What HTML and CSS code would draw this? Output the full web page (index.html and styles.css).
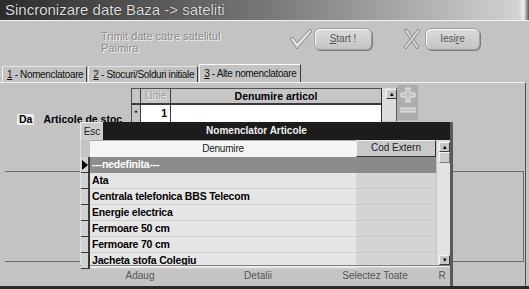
FILE: index.html
```html
<!DOCTYPE html>
<html>
<head>
<meta charset="utf-8">
<link rel="stylesheet" href="styles.css">
</head>
<body>
<div class="window">
  <div class="titlebar">Sincronizare date Baza -&gt; sateliti</div>
  <div class="top">
    <div class="msg">Trimit date catre satelitul<br>Palmira</div>
    <svg class="ico ico-check" width="24" height="22" viewBox="0 0 24 22">
      <path d="M1 11 L4 9 L8 15 L21 1 L23 3 L8 21 Z" fill="#d6d6d6" stroke="#8a8a8a" stroke-width="1"/>
      <path d="M4 11 L8 17 L21 3" fill="none" stroke="#f4f4f4" stroke-width="1"/>
    </svg>
    <div class="btn btn-start"><u>S</u>tart !</div>
    <svg class="ico ico-x" width="20" height="22" viewBox="0 0 20 22">
      <path d="M2 2 L5 1 L17 19 L15 21 Z" fill="#d6d6d6" stroke="#8a8a8a" stroke-width="1"/>
      <path d="M16 1 L18 3 L4 21 L2 19 Z" fill="#d6d6d6" stroke="#8a8a8a" stroke-width="1"/>
    </svg>
    <div class="btn btn-exit">Iesi<u>r</u>e</div>
  </div>
  <div class="tabs">
    <div class="tab"><u>1</u> - Nomenclatoare</div>
    <div class="tab"><u>2</u> - Stocuri/Solduri initiale</div>
    <div class="tab active"><u>3</u> - Alte nomenclatoare</div>
  </div>
  <div class="page">
    <div class="row1">
      <div class="labels"><span class="da">Da</span><span class="art">Articole de stoc</span></div>
      <div class="sgrid">
        <div class="sg-head">
          <div class="sg-ind"></div>
          <div class="sg-line">Linie</div>
          <div class="sg-name">Denumire articol</div>
        </div>
        <div class="sg-row">
          <div class="sg-ind">*</div>
          <div class="sg-line">1</div>
          <div class="sg-name"></div>
        </div>
      </div>
      <div class="sscroll"><div class="arrow-btn">&#9652;</div></div>
      <div class="pm">
        <svg width="16" height="16" viewBox="0 0 16 16"><path d="M6 1 H10 V6 H15 V10 H10 V15 H6 V10 H1 V6 H6 Z" fill="#c4c4c4" stroke="#e8e8e8" stroke-width="1"/></svg>
        <svg width="16" height="6" viewBox="0 0 16 6"><path d="M1 1 H15 V5 H1 Z" fill="#c4c4c4" stroke="#e8e8e8" stroke-width="1"/></svg>
      </div>
    </div>
    <div class="frame"></div>
  </div>

  <div class="popup">
    <div class="p-title">
      <div class="esc">Esc</div>
      <div class="p-caption">Nomenclator Articole</div>
    </div>
    <div class="p-body">
      <div class="p-grid">
        <div class="p-head"><div class="c-ind"></div><div class="c-name">Denumire</div><div class="c-code">Cod Extern</div></div>
        <div class="p-rows">
          <div class="p-row sel"><div class="c-ind"><span class="tri"></span></div><div class="c-name">---nedefinita---</div><div class="c-code"></div></div>
          <div class="p-row"><div class="c-ind"></div><div class="c-name">Ata</div><div class="c-code"></div></div>
          <div class="p-row"><div class="c-ind"></div><div class="c-name">Centrala telefonica BBS Telecom</div><div class="c-code"></div></div>
          <div class="p-row"><div class="c-ind"></div><div class="c-name">Energie electrica</div><div class="c-code"></div></div>
          <div class="p-row"><div class="c-ind"></div><div class="c-name">Fermoare 50 cm</div><div class="c-code"></div></div>
          <div class="p-row"><div class="c-ind"></div><div class="c-name">Fermoare 70 cm</div><div class="c-code"></div></div>
          <div class="p-row"><div class="c-ind"></div><div class="c-name">Jacheta stofa Colegiu</div><div class="c-code"></div></div>
        </div>
      </div>
      <div class="pscroll">
        <div class="arrow-btn">&#9652;</div>
        <div class="thumb"></div>
        <div class="track"></div>
        <div class="arrow-btn">&#9662;</div>
      </div>
    </div>
    <div class="p-foot"><span>Adaug</span><span>Detalii</span><span>Selectez Toate</span><span>R</span></div>
  </div>
</div>
</body>
</html>
```
FILE: styles.css
```css
* { box-sizing: border-box; }
html, body { margin: 0; padding: 0; background: #c3c3c3; }
body { width: 529px; height: 289px; overflow: hidden; font-family: "Liberation Sans", Arial, sans-serif; }

.window {
  position: relative;
  width: 529px;
  height: 289px;
  background: #c3c3c3;
  display: flex;
  flex-direction: column;
  border-bottom: 3px solid #2a2a2a;
}

.titlebar {
  height: 21px;
  flex: none;
  background: linear-gradient(90deg, #2c2c2c 0%, #777 50%, #d2d2d2 98%, #eee 99%, #555 100%);
  border-bottom: 1px solid #f2f2f2;
  color: #dedede;
  font-size: 15px;
  line-height: 20px;
  padding-left: 5px;
  text-shadow: 0 0 1px #000;
}

.top {
  height: 43px;
  flex: none;
  display: flex;
  align-items: flex-start;
  padding: 7px 0 0 101px;
}
.msg {
  width: 188px;
  padding-top: 2px;
  font-size: 11px;
  line-height: 12px;
  color: #8a8a8a;
  text-shadow: 1px 1px 0 #f4f4f4;
}
.ico { flex: none; }
.ico-check { margin-top: 0; }
.ico-x { margin-left: 30px; margin-right: 3px; }
.btn {
  flex: none;
  height: 22px;
  margin-top: 0;
  border-radius: 6px;
  background: linear-gradient(#dcdcdc, #c4c4c4);
  border: 1px solid #a0a0a0;
  box-shadow: inset 1px 1px 0 #f8f8f8, 1px 1px 0 #7a7a7a;
  font-size: 10px;
  line-height: 20px;
  text-align: center;
  color: #555;
}
.btn-start { width: 58px; margin-left: 1px; }
.btn-exit { width: 55px; }

.tabs {
  height: 18px;
  flex: none;
  display: flex;
  align-items: flex-end;
  padding-left: 2px;
  font-size: 10px;
  letter-spacing: -0.35px;
  color: #111;
}
.tab {
  height: 16px;
  line-height: 15px;
  padding: 0 3px 0 4px;
  border-left: 1px solid #f2f2f2;
  border-top: 1px solid #e4e4e4;
  border-right: 1px solid #3c3c3c;
  margin-right: 1px;
}
.tab.active { height: 18px; line-height: 17px; border-top-color: #fff; }

.page {
  flex: 1;
  border-top: 1px solid #f4f4f4;
  border-right: 1px solid #505050;
  margin-right: 3px;
  padding-top: 4px;
}
.row1 { display: flex; align-items: flex-start; height: 35px; }
.labels {
  width: 131px;
  flex: none;
  display: flex;
  align-items: center;
  gap: 9px;
  padding: 26px 0 0 17px;
  font-weight: bold;
  font-size: 10.5px;
}
.da { background: #ececec; padding: 0 2px; line-height: 11px; }
.art { letter-spacing: 0; }

.sgrid {
  width: 251px;
  margin-top: 1px;
  border-left: 1px solid #505050;
  border-top: 1px solid #505050;
  border-right: 1px solid #303030;
  font-size: 10.5px;
}
.sg-head, .sg-row { display: flex; }
.sg-head { height: 16px; background: #c6c6c6; border-bottom: 2px solid #3a3a3a; }
.sg-row { height: 17px; }
.sg-ind { width: 9px; flex: none; border-right: 1px solid #3a3a3a; }
.sg-line { width: 30px; flex: none; border-right: 1px solid #3a3a3a; }
.sg-name { flex: 1; }
.sg-head .sg-line { color: #9a9a9a; text-shadow: 1px 1px 0 #f0f0f0; text-align: center; line-height: 14px; font-size: 10px; }
.sg-head .sg-name { font-weight: bold; text-align: center; line-height: 14px; }
.sg-row .sg-ind { background: #c6c6c6; font-size: 9px; text-align: center; line-height: 17px; }
.sg-row .sg-line { background: #fff; text-align: right; font-weight: bold; padding-right: 3px; line-height: 17px; }
.sg-row .sg-name { background: #fff; }

.sscroll {
  width: 15px;
  height: 33px;
  margin-top: 1px;
  background: #dcdcdc;
  padding: 1px 0 0 4px;
  border-right: 1px solid #555;
}
.arrow-btn {
  width: 11px;
  height: 10px;
  background: #c8c8c8;
  border: 1px solid;
  border-color: #f4f4f4 #404040 #404040 #f4f4f4;
  font-size: 7px;
  line-height: 8px;
  text-align: center;
  color: #000;
}
.pm {
  width: 21px;
  height: 35px;
  margin-top: -2px;
  background: #adadad;
  display: flex;
  flex-direction: column;
  align-items: center;
  gap: 4px;
  padding-top: 2px;
}

.frame {
  margin: 49px 1px 0 5px;
  height: 91px;
  border-top: 1px solid #6e6e6e;
  border-bottom: 1px solid #6e6e6e;
  border-right: 1px solid #6e6e6e;
}

/* popup */
.popup {
  position: absolute;
  left: 80px;
  top: 122px;
  width: 373px;
  height: 164px;
  background: #c4c4c4;
  border-right: 3px solid #5a5a5a;
  display: flex;
  flex-direction: column;
}
.p-title { height: 18px; display: flex; flex: none; }
.esc {
  width: 23px;
  background: #cdcdcd;
  border-top: 1px solid #eee;
  border-left: 1px solid #eee;
  font-size: 10px;
  line-height: 17px;
  text-align: center;
  color: #222;
}
.p-caption {
  flex: 1;
  background: #1c1c1c;
  color: #f0f0f0;
  font-weight: bold;
  font-size: 10px;
  line-height: 18px;
  text-align: center;
  padding-right: 40px;
}
.p-body { display: flex; height: 125px; flex: none; }
.p-grid { width: 355px; flex: none; border-left: 1px solid #e0e0e0; }
.p-head { display: flex; height: 17px; }
.c-ind { width: 9px; flex: none; }
.c-name { width: 266px; flex: none; }
.c-code { width: 80px; flex: none; }
.p-head .c-name {
  background: #f4f4f4;
  border-top: 1px solid #aaa;
  font-size: 10px;
  line-height: 16px;
  text-align: center;
  color: #222;
  letter-spacing: -0.2px;
}
.p-head .c-code {
  background: #c9c9c9;
  border: 1px solid;
  border-color: #f0f0f0 #333 #333 #f0f0f0;
  font-size: 10px;
  line-height: 14px;
  text-align: center;
  color: #222;
}
.p-rows { height: 108px; display: grid; grid-template-rows: repeat(7, 1fr); }
.p-row { display: flex; }
.p-row .c-ind {
  background: #d2d2d2;
  border-right: 2px solid #3a3a3a;
  border-bottom: 1px solid #3a3a3a;
  position: relative;
}
.p-row .c-name {
  background: #e6e6e6;
  border-bottom: 1px solid #cfcfcf;
  font-weight: bold;
  font-size: 10.5px;
  letter-spacing: -0.2px;
  line-height: 15px;
  padding-left: 2px;
  color: #000;
}
.p-row .c-code { background: #d4d4d4; border-bottom: 1px solid #cacaca; }
.p-row.sel .c-name { background: #8c8c8c; color: #fff; border-bottom-color: #8c8c8c; }
.p-row.sel .c-code { background: #8a8a8a; border-bottom-color: #8a8a8a; }
.tri {
  position: absolute;
  left: 1px;
  top: 3px;
  border-left: 6px solid #000;
  border-top: 5px solid transparent;
  border-bottom: 5px solid transparent;
}
.pscroll {
  width: 15px;
  margin-left: 2px;
  display: flex;
  flex-direction: column;
  padding: 2px 0 0 2px;
  background: #e2e2e2;
}
.pscroll .arrow-btn { width: 11px; flex: none; }
.thumb { height: 11px; width: 11px; background: #cdcdcd; border: 1px solid; border-color: #f4f4f4 #777 #777 #f4f4f4; flex: none; }
.track { flex: 1; }
.p-foot {
  height: 21px;
  flex: none;
  border-top: 1px solid #808080;
  box-shadow: inset 0 1px 0 #efefef;
  display: grid;
  grid-template-columns: 120px 116px 118px 1fr;
  font-size: 10px;
  line-height: 20px;
  text-align: center;
  color: #555;
}
```
